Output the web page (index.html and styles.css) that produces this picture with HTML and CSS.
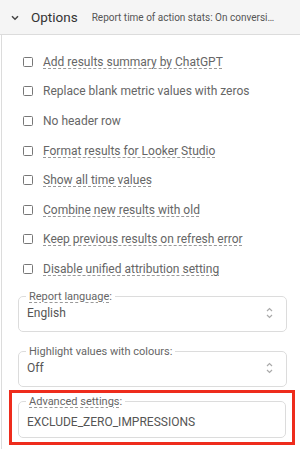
FILE: index.html
```html
<!DOCTYPE html>
<html lang="en">
<head>
<meta charset="UTF-8">
<title>Options</title>
<link rel="stylesheet" href="styles.css">
</head>
<body>

<div class="options-header">
  <svg class="chevron" width="8" height="6" viewBox="0 0 8 6"><path d="M1 1.2 L4 4.2 L7 1.2" fill="none" stroke="#444" stroke-width="1.5"/></svg>
  <span class="options-title">Options</span>
  <span class="options-summary">Report time of action stats: On conversion date</span>
</div>

<div class="options-body">
  <ul class="checks">
    <li><span class="box"></span><span class="label tip">Add results summary by ChatGPT</span></li>
    <li><span class="box"></span><span class="label">Replace blank metric values with zeros</span></li>
    <li><span class="box"></span><span class="label">No header row</span></li>
    <li><span class="box"></span><span class="label tip">Format results for Looker Studio</span></li>
    <li><span class="box"></span><span class="label tip">Show all time values</span></li>
    <li><span class="box"></span><span class="label tip">Combine new results with old</span></li>
    <li><span class="box"></span><span class="label tip">Keep previous results on refresh error</span></li>
    <li><span class="box"></span><span class="label tip">Disable unified attribution setting</span></li>
  </ul>

  <fieldset class="field">
    <legend><span class="tip">Report language</span>:</legend>
    <div class="field-value">
      <span>English</span>
      <svg class="updown" width="7" height="12" viewBox="0 0 7 12"><path d="M1 4 L3.5 1.5 L6 4 M1 8 L3.5 10.5 L6 8" fill="none" stroke="#aaa" stroke-width="1.2"/></svg>
    </div>
  </fieldset>

  <fieldset class="field">
    <legend>Highlight values with colours:</legend>
    <div class="field-value">
      <span>Off</span>
      <svg class="updown" width="7" height="12" viewBox="0 0 7 12"><path d="M1 4 L3.5 1.5 L6 4 M1 8 L3.5 10.5 L6 8" fill="none" stroke="#aaa" stroke-width="1.2"/></svg>
    </div>
  </fieldset>

  <div class="highlight">
    <fieldset class="field">
      <legend><span class="tip">Advanced settings</span>:</legend>
      <div class="field-value">
        <span>EXCLUDE_ZERO_IMPRESSIONS</span>
      </div>
    </fieldset>
  </div>
</div>

</body>
</html>
```

FILE: styles.css
```css
body {
  margin: 0;
  font-family: Roboto, "Liberation Sans", Arial, sans-serif;
  color: #666;
  background: #fff;
}
.options-header {
  display: flex;
  align-items: center;
  height: 34px;
  padding-left: 11px;
  background-color: #f5f5f5;
  border-bottom: 1px solid #dcdcdc;
}
.chevron {
  margin-top: 1px;
}
.options-title {
  font-size: 13.5px;
  color: #333;
  margin-left: 12px;
}
.options-summary {
  font-size: 10px;
  color: #555;
  margin-left: 14px;
  width: 183px;
  white-space: nowrap;
  overflow: hidden;
  text-overflow: ellipsis;
}
.options-body {
  margin-left: 1px;
  border-left: 1px solid #dcdcdc;
  padding-top: 12px;
  padding-bottom: 6px;
}
.checks {
  list-style: none;
  margin: 0 0 6px;
  padding: 0;
}
.checks li {
  display: flex;
  align-items: center;
  height: 29.6px;
  font-size: 12px;
}
.box {
  width: 8px;
  height: 8px;
  border: 1.5px solid #777;
  border-radius: 1.5px;
  margin-left: 21px;
}
.label {
  margin-left: 10px;
}
.tip {
  text-decoration: underline dashed #999;
  text-decoration-thickness: 1px;
  text-underline-offset: 2px;
}
.field {
  border: 1px solid #dcdcdc;
  border-radius: 5px;
  margin: 0 13px 13px 16px;
  padding: 1px 8px 9px;
  min-width: 0;
}
.field legend {
  font-size: 11px;
  padding: 0 3px;
  margin-left: -1px;
  line-height: 13px;
}
.field-value {
  display: flex;
  align-items: center;
  justify-content: space-between;
  font-size: 12px;
  color: #555;
  height: 18px;
}
.updown {
  margin-right: 5px;
}
.highlight {
  margin: -10px 5px 0 7px;
  border: 3px solid #ee2c1c;
  padding: 2.5px 0 4px;
}
.highlight .field {
  margin: 0 6px;
  padding-top: 5px;
  padding-bottom: 6px;
}
```
